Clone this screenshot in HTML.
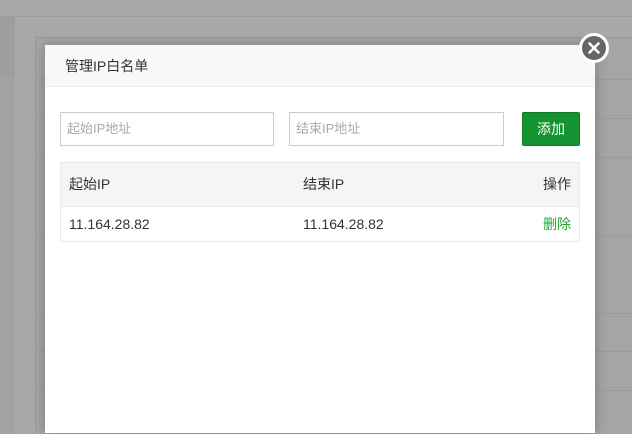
<!DOCTYPE html><html><head><meta charset="utf-8"><style>
body{margin:0;width:632px;height:433px;overflow:hidden;background:#a3a3a3;font-family:"Liberation Sans","Noto Sans CJK SC",sans-serif;position:relative}
.a{position:absolute}
.in{position:absolute;top:112px;height:34px;border:1px solid #ccc;background:#fff;box-sizing:border-box;font-size:13px;color:#aaa;line-height:32px;padding-left:6px}
</style></head><body>
<div class="a" style="left:0;top:0;width:632px;height:16px;background:#a8a8a8"></div>
<div class="a" style="left:15px;top:16px;width:617px;height:417px;background:#a9a9a9;border-top:1px solid #9c9c9c"></div>
<div class="a" style="left:0;top:16px;width:15px;height:60px;background:#9e9e9e"></div>
<div class="a" style="left:35px;top:37px;width:597px;height:396px;background:#a5a5a5;border-left:1px solid #999;border-top:1px solid #999"></div>
<div class="a" style="left:35px;top:79px;width:597px;height:1px;background:#9a9a9a"></div>
<div class="a" style="left:35px;top:118px;width:597px;height:1px;background:#9a9a9a"></div>
<div class="a" style="left:35px;top:157px;width:597px;height:1px;background:#9a9a9a"></div>
<div class="a" style="left:35px;top:235px;width:597px;height:1px;background:#9a9a9a"></div>
<div class="a" style="left:35px;top:313px;width:597px;height:1px;background:#9a9a9a"></div>
<div class="a" style="left:35px;top:351px;width:597px;height:1px;background:#9a9a9a"></div>
<div class="a" style="left:35px;top:390px;width:597px;height:1px;background:#9a9a9a"></div>
<div class="a" style="left:45px;top:45px;width:550px;height:388px;background:#fff;box-shadow:0 0 12px rgba(0,0,0,.25)">
<div style="height:41px;background:#f8f8f8;border-bottom:1px solid #eee;font-size:14px;color:#333;line-height:42px;padding-left:20px">管理IP白名单</div>
</div>
<div class="in" style="left:60px;width:214px">起始IP地址</div>
<div class="in" style="left:289px;width:215px">结束IP地址</div>
<div class="a" style="left:522px;top:112px;width:58px;height:34px;background:#139430;border:1px solid #0d7a26;box-sizing:border-box;border-radius:2px;color:#fff;font-size:14px;text-align:center;line-height:32px">添加</div>
<div class="a" style="left:60px;top:162px;width:520px;height:80px;border:1px solid #e8e8e8;box-sizing:border-box;font-size:14px;color:#333">
<div style="height:43px;background:#f5f5f5;border-bottom:1px solid #e8e8e8;line-height:43px;position:relative">
<span class="a" style="left:8px">起始IP</span><span class="a" style="left:242px">结束IP</span><span class="a" style="right:8px">操作</span></div>
<div style="height:35px;line-height:35px;position:relative">
<span class="a" style="left:8px">11.164.28.82</span><span class="a" style="left:242px">11.164.28.82</span><span class="a" style="right:8px;color:#20a53a">删除</span></div>
</div>
<div class="a" style="left:579px;top:33px;width:24px;height:24px;border-radius:50%;background:#666;border:3px solid #fff">
<svg width="24" height="24" viewBox="0 0 24 24" style="display:block"><path d="M7.5 7.5L16.5 16.5M16.5 7.5L7.5 16.5" stroke="#fff" stroke-width="2.6" stroke-linecap="round"/></svg></div>
</body></html>
